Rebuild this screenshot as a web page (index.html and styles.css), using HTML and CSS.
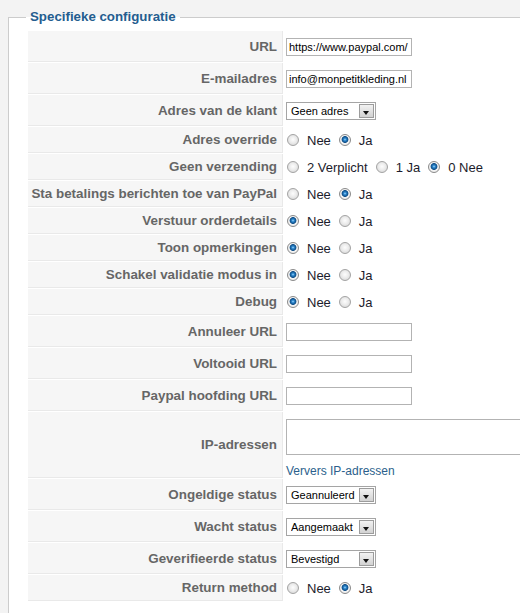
FILE: index.html
```html
<!DOCTYPE html>
<html>
	<head>
		<meta charset="UTF-8">
		<title>Specifieke configuratie</title>
		<link rel="stylesheet" href="styles.css">
	</head>
	<body>
		<fieldset class="adminform">
			<legend>Specifieke configuratie</legend>
			<div class="paramlist">
				<div class="key">URL</div>
				<div class="value"><input type="text" class="text" value="https://www.paypal.com/"></div>

				<div class="key">E-mailadres</div>
				<div class="value"><input type="text" class="text" value="info@monpetitkleding.nl"></div>

				<div class="key">Adres van de klant</div>
				<div class="value">
					<span class="select"><select><option>Geen adres</option></select><span class="arrow"></span></span>
				</div>

				<div class="key small">Adres override</div>
				<div class="value">
					<label class="opt"><input type="radio" name="override">Nee</label>
					<label class="opt"><input type="radio" name="override" checked>Ja</label>
				</div>

				<div class="key small">Geen verzending</div>
				<div class="value">
					<label class="opt"><input type="radio" name="shipping">2 Verplicht</label>
					<label class="opt"><input type="radio" name="shipping">1 Ja</label>
					<label class="opt"><input type="radio" name="shipping" checked>0 Nee</label>
				</div>

				<div class="key small">Sta betalings berichten toe van PayPal</div>
				<div class="value">
					<label class="opt"><input type="radio" name="ipn">Nee</label>
					<label class="opt"><input type="radio" name="ipn" checked>Ja</label>
				</div>

				<div class="key small">Verstuur orderdetails</div>
				<div class="value">
					<label class="opt"><input type="radio" name="details" checked>Nee</label>
					<label class="opt"><input type="radio" name="details">Ja</label>
				</div>

				<div class="key small">Toon opmerkingen</div>
				<div class="value">
					<label class="opt"><input type="radio" name="notes" checked>Nee</label>
					<label class="opt"><input type="radio" name="notes">Ja</label>
				</div>

				<div class="key small">Schakel validatie modus in</div>
				<div class="value">
					<label class="opt"><input type="radio" name="sandbox" checked>Nee</label>
					<label class="opt"><input type="radio" name="sandbox">Ja</label>
				</div>

				<div class="key small">Debug</div>
				<div class="value">
					<label class="opt"><input type="radio" name="debug" checked>Nee</label>
					<label class="opt"><input type="radio" name="debug">Ja</label>
				</div>

				<div class="key">Annuleer URL</div>
				<div class="value"><input type="text" class="text" value=""></div>

				<div class="key">Voltooid URL</div>
				<div class="value"><input type="text" class="text" value=""></div>

				<div class="key">Paypal hoofding URL</div>
				<div class="value"><input type="text" class="text" value=""></div>

				<div class="key tall">IP-adressen</div>
				<div class="value stack">
					<textarea></textarea>
					<a href="#" class="refresh">Ververs IP-adressen</a>
				</div>

				<div class="key">Ongeldige status</div>
				<div class="value">
					<span class="select"><select><option>Geannuleerd</option></select><span class="arrow"></span></span>
				</div>

				<div class="key">Wacht status</div>
				<div class="value">
					<span class="select"><select><option>Aangemaakt</option></select><span class="arrow"></span></span>
				</div>

				<div class="key">Geverifieerde status</div>
				<div class="value">
					<span class="select"><select><option>Bevestigd</option></select><span class="arrow"></span></span>
				</div>

				<div class="key small">Return method</div>
				<div class="value">
					<label class="opt"><input type="radio" name="return">Nee</label>
					<label class="opt"><input type="radio" name="return" checked>Ja</label>
				</div>
			</div>
		</fieldset>
	</body>
</html>
```
FILE: styles.css
```css
html, body{overflow: hidden;}
body{margin: 0;background: #f3f3f3;font-family: "Liberation Sans", Arial, sans-serif;font-size: 13px;color: #222;}

.adminform{width: 600px;margin: 9px 0 0 8px;padding: 6px 0 40px 19px;border: 1px solid #ccc;border-right: 0;background: #fff;}
.adminform legend{margin-left: -2px;padding: 0 4px;font-size: 13.3px;line-height: 16px;font-weight: bold;color: #245d8f;}

.paramlist{display: grid;grid-template-columns: 255px 1fr;gap: 1px;}
.paramlist .key{box-sizing: border-box;height: 31px;display: flex;align-items: center;justify-content: flex-end;
padding-right: 5px;background: #f6f6f6;border-right: 1px solid #e9e9e9;border-bottom: 1px solid #e9e9e9;
font-size: 13.4px;font-weight: bold;color: #666;white-space: nowrap;}
.paramlist .key.small{height: 26px;}
.paramlist .key.tall{height: 66px;}
.paramlist .value{display: flex;align-items: center;padding-left: 2px;}
.paramlist .value.stack{flex-direction: column;align-items: flex-start;justify-content: flex-start;padding-top: 7px;}

input.text{box-sizing: border-box;width: 126px;height: 18px;margin: 0;padding: 0 2px;border: 1px solid #b3b3b3;
font-family: "Liberation Sans", Arial, sans-serif;font-size: 11px;color: #000;}

textarea{box-sizing: border-box;width: 300px;height: 36px;margin: 0;padding: 2px;border: 1px solid #b3b3b3;resize: none;}
.refresh{margin-top: 9px;font-size: 12px;line-height: 14px;color: #2c5f8c;text-decoration: none;}

.select{position: relative;display: inline-block;}
.select select{appearance: none;-webkit-appearance: none;box-sizing: border-box;width: 90px;height: 18px;margin: 0;
padding: 0 0 0 4px;border: 1px solid #a5a5a5;border-radius: 0;background: #fff;
font-family: "Liberation Sans", Arial, sans-serif;font-size: 11px;color: #000;}
.select .arrow{position: absolute;right: 2px;top: 2px;box-sizing: border-box;width: 15px;height: 14px;
border: 1px solid #9c9c9c;background: linear-gradient(#f2f2f2, #d2d2d2);pointer-events: none;}
.select .arrow:after{content: "";position: absolute;left: 3px;top: 6px;border-left: 3.5px solid transparent;
border-right: 3.5px solid transparent;border-top: 4px solid #111;}

.opt{display: inline-flex;align-items: center;margin-right: 7px;color: #1c1c2c;}
.opt input{appearance: none;-webkit-appearance: none;width: 12px;height: 12px;margin: 0 8px 0 1px;border-radius: 50%;
border: 1px solid #a3a3a3;box-sizing: border-box;
background: radial-gradient(circle at 50% 45%, #fdfdfd 0, #ececec 45%, #cfcfcf 100%);}
.opt input:checked{border-color: #8a8a8a;
background: radial-gradient(circle at 50% 45%, #a9dcff 0, #2f8ad0 1.2px, #0c4c86 3px, #f4f4f4 3.8px, #e4e4e4 100%);}
```
